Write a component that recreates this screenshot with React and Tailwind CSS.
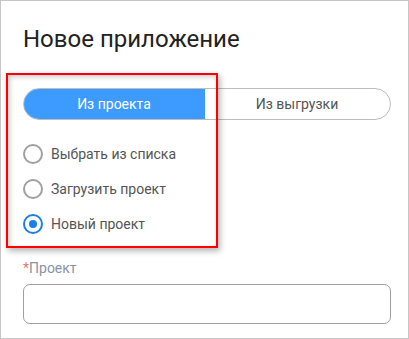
import React, { useState } from "react";

const options = ["Выбрать из списка", "Загрузить проект", "Новый проект"];

export default function App() {
  const [source, setSource] = useState("project");
  const [choice, setChoice] = useState(2);

  return (
    <div
      className="relative h-[339px] w-[409px] border border-[#c6c6c6] bg-white pl-[22px] pr-[17px]"
      style={{ fontFamily: "Roboto, 'Noto Sans', sans-serif" }}
    >
      <h1 className="mt-[24px] text-[24px] leading-[28px] text-[#222]">Новое приложение</h1>

      <div className="relative mt-[35px]">
        <div className="flex h-[32px] w-[368px] overflow-hidden rounded-full border border-[#bdbdbd] text-[14px]">
          <button
            onClick={() => setSource("project")}
            className={
              source === "project"
                ? "-m-px w-[182px] rounded-l-full bg-[#3d9bff] text-white"
                : "w-[181px] text-[#555]"
            }
          >
            Из проекта
          </button>
          <button
            onClick={() => setSource("export")}
            className={
              source === "export"
                ? "-m-px flex-1 rounded-r-full bg-[#3d9bff] text-white"
                : "flex-1 text-[#555]"
            }
          >
            Из выгрузки
          </button>
        </div>

        <div className="mt-[24px] flex flex-col gap-[15px]">
          {options.map((label, i) => (
            <label key={label} className="flex h-[20px] cursor-pointer items-center gap-[8px] text-[14px] text-[#555]">
              <span
                onClick={() => setChoice(i)}
                className={
                  choice === i
                    ? "flex h-[20px] w-[20px] items-center justify-center rounded-full border-2 border-[#1a7fe8]"
                    : "h-[20px] w-[20px] rounded-full border-2 border-[#a0a0a0]"
                }
              >
                {choice === i ? <span className="h-[8px] w-[8px] rounded-full bg-[#1a7fe8]" /> : null}
              </span>
              {label}
            </label>
          ))}
        </div>

        <div className="pointer-events-none absolute left-[-17px] top-[-15px] h-[175px] w-[212px] border-2 border-[#f00] shadow-[2px_3px_6px_rgba(0,0,0,0.3),inset_2px_2px_5px_rgba(0,0,0,0.2)]" />
      </div>

      <div className="mt-[26px] text-[14px] leading-[16px] text-[#8a93a5]">
        <span className="text-[#f07a6a]">*</span>Проект
      </div>
      <input className="mt-[8px] h-[40px] w-[368px] rounded-[7px] border border-[#a0a0a0] px-3 text-[14px] outline-none" />
    </div>
  );
}
